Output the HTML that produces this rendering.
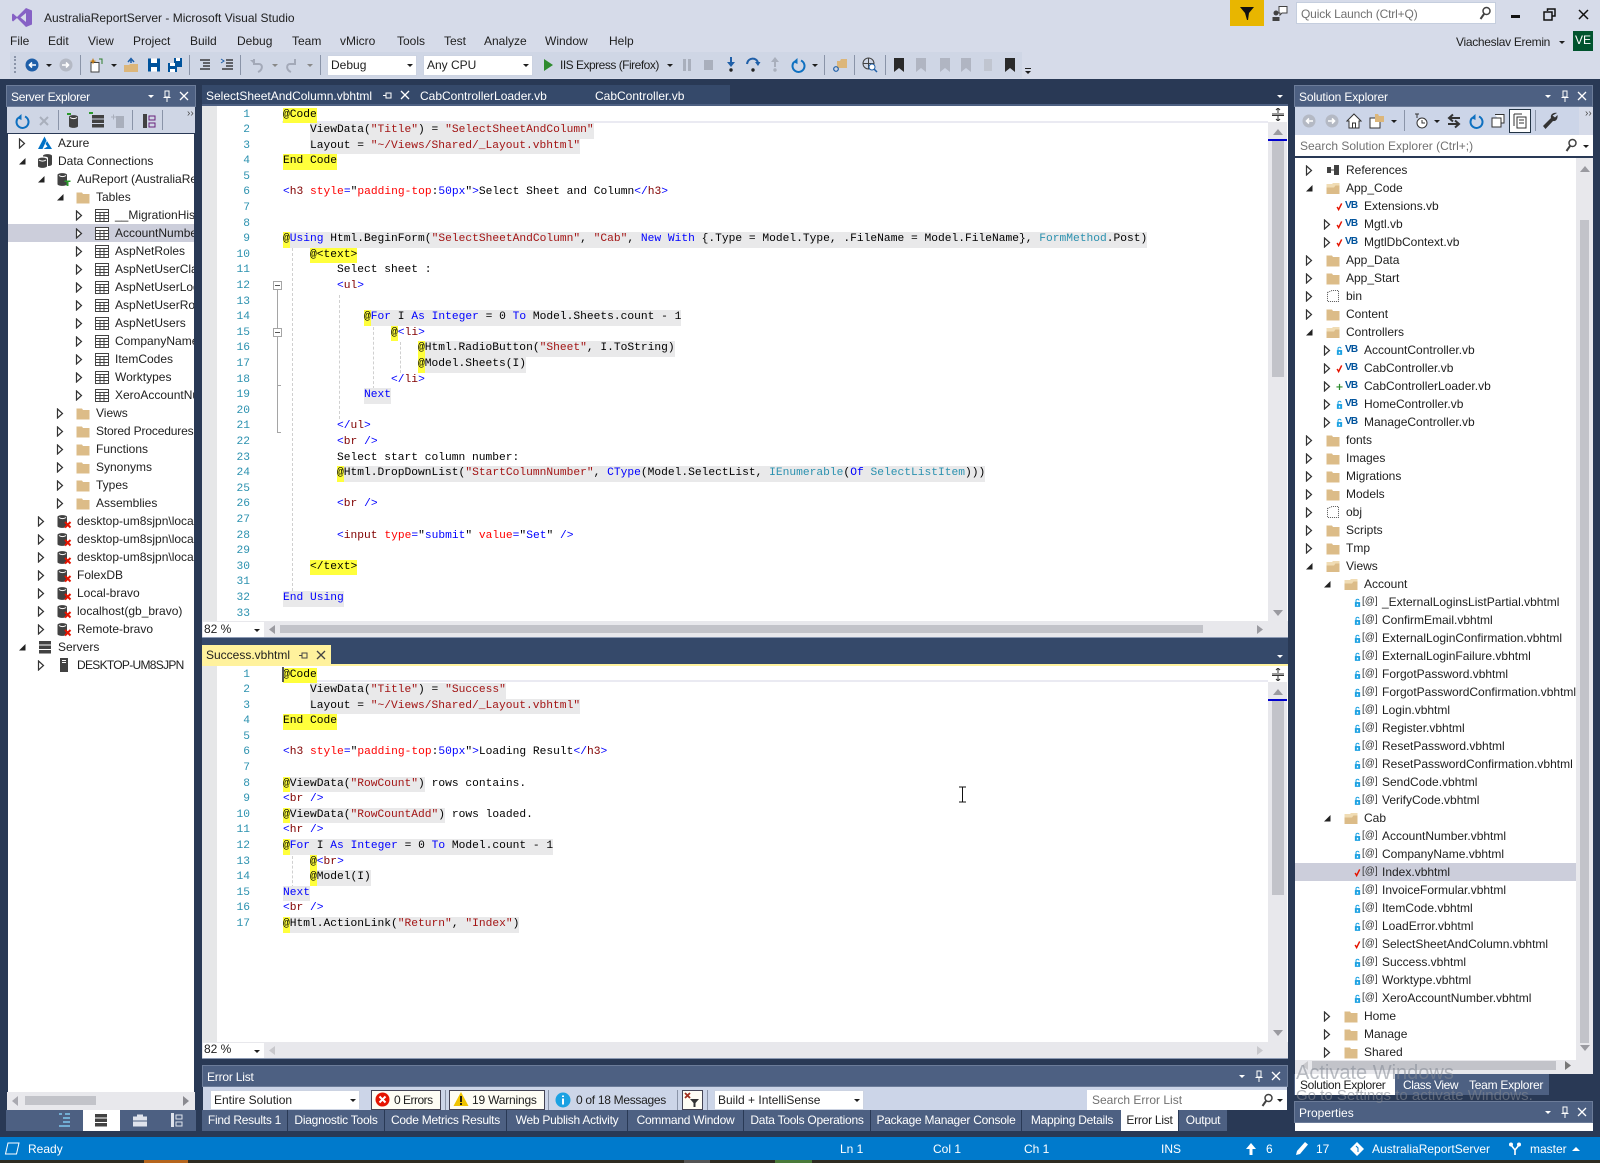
<!DOCTYPE html>
<html lang="en"><head><meta charset="utf-8"><title>AustraliaReportServer - Microsoft Visual Studio</title>
<style>
html,body{margin:0;padding:0;width:1600px;height:1163px;overflow:hidden;background:#293955}
body{position:relative;font:12px/16px "Liberation Sans",sans-serif;color:#1e1e1e}
.x{position:absolute;white-space:nowrap;font-weight:normal;font-style:normal}
.b{position:absolute;display:block}
.w{color:#fff}
.n3{letter-spacing:-.3px}
.tree{position:absolute;background:#fff;overflow:hidden}
.r{position:relative;height:18px;--l:0;color:#1e1e1e}
.L1{--l:1}.L2{--l:2}.L3{--l:3}
.r svg{position:absolute}
.ar{width:9px;height:11px;top:4px;left:calc(var(--ax) + var(--l)*var(--in))}
.ic{width:16px;height:16px;top:1px;left:calc(var(--ix) + var(--l)*var(--in))}
.t{position:absolute;top:0;line-height:18px;white-space:nowrap;left:calc(var(--tx) + var(--l)*var(--in))}
.vb{position:absolute;top:0;line-height:18px;font-size:10px;font-weight:bold;letter-spacing:-.8px;color:#00539c;left:calc(var(--ix) + var(--l)*var(--in) + 2px)}
.fi{position:absolute;top:0;line-height:18px;font-size:10px;color:#333;left:calc(var(--ix) + var(--l)*var(--in) + 1px)}
.st{width:7px;height:9px;top:5px;left:calc(var(--ix) + var(--l)*var(--in) - 7px)}
.sel{background:#cccedb}
.code{position:absolute;font:11.25px/15.6px "Liberation Mono",monospace;color:#000;white-space:pre}
.c{height:15.6px;line-height:15.6px}
.num{position:absolute;width:40px;text-align:right;font:11.25px/15.6px "Liberation Mono",monospace;color:#2b91af}
.k{color:#00f}.s{color:#a31515}.n{color:#800000}.d{color:#00f}.a{color:#f00}.p{color:#2b91af}
.g,.y{display:inline-block;height:15.6px}
.g{background:#e9e9ea}.y{background:#ffff3c}
.sb{position:absolute;background:#e8e8ec}
.th{position:absolute;background:#c2c3c9}
.tab{position:absolute;top:1110px;height:21px;line-height:20px;background:#4d6082;color:#fff;text-align:center;letter-spacing:-.25px}
.title{position:absolute;background:#4d6082;height:22px;box-shadow:inset 0 0 0 1px #6c7c99}
.tb{position:absolute;background:#ccd5e8}
.cb{position:absolute;background:#fff;border:1px solid #ccd3e2;box-sizing:border-box;padding-left:3px;line-height:18px}
.sep{position:absolute;width:1px;background:#8a94a8}
.ds{position:absolute;width:0;height:0;border-left:3px solid transparent;border-right:3px solid transparent;border-top:3px solid #1e1e1e}
.gd{position:absolute;width:0;border-left:1px dashed #d0d0d0}
</style></head><body>
<svg width="0" height="0" style="position:absolute"><defs>
<symbol id="ra" viewBox="0 0 9 11"><path d="M1.5 1 L6.5 5.5 L1.5 10 Z" fill="#fff" stroke="#333" stroke-width="1.2"/></symbol>
<symbol id="da" viewBox="0 0 9 11"><path d="M7.5 2 V8.5 H1 Z" fill="#222"/></symbol>
<symbol id="fo" viewBox="0 0 16 16"><path d="M1.5 3.5 H7 L8 5 H14.5 V14.5 H1.5 Z" fill="#dcbc88"/></symbol>
<symbol id="fop" viewBox="0 0 16 16"><path d="M1.5 4 H7 L8 3 H14.5 V14 H1.5 Z" fill="#f0dcb4"/><path d="M1.5 7.5 H9 L10.5 5.5 H14.5 V14 H1.5 Z" fill="#dcbc88"/></symbol>
<symbol id="tbl" viewBox="0 0 16 16"><path d="M1.5 2.5 H14.5 V14.5 H1.5 Z M1.5 5.5 H14.5 M1.5 8.5 H14.5 M1.5 11.5 H14.5 M6 5.5 V14.5 M10 5.5 V14.5" fill="#fff" stroke="#424242"/></symbol>
<symbol id="db" viewBox="0 0 16 16"><path d="M2 4 C2 1.5 11 1.5 11 4 V13 C11 15.5 2 15.5 2 13 Z" fill="#424242"/><path d="M3 4.5 C5 6 8 6 10 4.5" fill="none" stroke="#fff"/></symbol>
<symbol id="dbx" viewBox="0 0 16 16"><path d="M1.5 4 C1.5 1.5 11 1.5 11 4 V13 C11 15.5 1.5 15.5 1.5 13 Z" fill="#424242"/><path d="M3 4.5 C5 6 8 6 10 4.5" fill="none" stroke="#fff"/><path d="M9 9 L14.5 14.5 M14.5 9 L9 14.5" stroke="#e51400" stroke-width="2"/></symbol>
<symbol id="dbg" viewBox="0 0 16 16"><path d="M1.5 4 C1.5 1.5 11 1.5 11 4 V13 C11 15.5 1.5 15.5 1.5 13 Z" fill="#424242"/><path d="M3 4.5 C5 6 8 6 10 4.5" fill="none" stroke="#fff"/><path d="M8.5 9.5 H14.5 V11 H12.5 V15 H10.5 V11 H8.5 Z" fill="#2c9a2c"/></symbol>
<symbol id="dbs" viewBox="0 0 16 16"><path d="M6 3 C6 0.5 15 0.5 15 3 V11 C15 12.5 13 13 11 13 V5 C11 4 9 3.5 6 3.5 Z" fill="#424242"/><path d="M1 6.5 C1 4 10 4 10 6.5 V13 C10 15.5 1 15.5 1 13 Z" fill="#424242"/><path d="M2 7 C4 8.5 7 8.5 9 7" fill="none" stroke="#fff"/></symbol>
<symbol id="srv" viewBox="0 0 16 16"><path d="M2 2 H14 V5.5 H2 Z M2 6.5 H14 V10 H2 Z M2 11 H14 V14.5 H2 Z" fill="#424242"/></symbol>
<symbol id="pc" viewBox="0 0 16 16"><path d="M4 1 H12 V15 H4 Z" fill="#424242"/><path d="M6 3.5 H10 M6 5.5 H10" stroke="#fff"/></symbol>
<symbol id="az" viewBox="0 0 16 16"><path d="M7.5 1.5 L1 14 H5.5 L9.5 5.5 Z" fill="#0072c6"/><path d="M10 6 L15 14 H6.5 L10.5 11.5 L8.5 9 Z" fill="#0072c6"/></symbol>
<symbol id="refs" viewBox="0 0 16 16"><path d="M2 5 H6 V11 H2 Z M9 3 H14 V13 H9 Z" fill="#424242"/><path d="M6 8 H9" stroke="#424242"/></symbol>
<symbol id="dots" viewBox="0 0 16 16"><path d="M2.5 4.5 L7 2.5 H13.5 V13.5 H2.5 Z" fill="none" stroke="#555" stroke-dasharray="1 1"/></symbol>
<symbol id="lk" viewBox="0 0 8 10"><path d="M1 4.5 H7 V10 H1 Z" fill="#1ba1e2"/><path d="M2.3 4.5 V2.7 C2.3 .8 5.7 .8 5.7 2.7" fill="none" stroke="#1ba1e2" stroke-width="1.2"/><path d="M3.2 6.5 H4.8 V8.5 H3.2 Z" fill="#fff"/></symbol>
<symbol id="ck" viewBox="0 0 8 10"><path d="M1.3 5.5 L3 8.5 L6.5 1.5" fill="none" stroke="#e51400" stroke-width="1.7"/></symbol>
<symbol id="pl" viewBox="0 0 8 10"><path d="M4 2 V9 M.5 5.5 H7.5" fill="none" stroke="#2c8a2c" stroke-width="1.4"/></symbol>
<symbol id="x" viewBox="0 0 10 10"><path d="M1 1 L9 9 M9 1 L1 9" stroke="#fff" stroke-width="1.3"/></symbol>
<symbol id="pin" viewBox="0 0 10 12"><path d="M3 1 H7 V7 H3 Z M1.5 7.5 H8.5 M5 8 V12" fill="none" stroke="#fff"/></symbol>
<symbol id="rf" viewBox="0 0 16 16"><path d="M4 5 A6 6 0 1 0 11 3.5" fill="none" stroke="#0e70c0" stroke-width="2"/><path d="M7.5 1 L7.5 7 L3 5 Z" fill="#0e70c0"/></symbol>
<symbol id="circ" viewBox="0 0 16 16"><circle cx="8" cy="8" r="6.5" fill="currentColor"/><path d="M12 8 H6 M8 5.5 L5.5 8 L8 10.5" fill="none" stroke="#fff" stroke-width="1.6"/></symbol>
<symbol id="bm" viewBox="0 0 16 16"><path d="M3 1 H13 V15 L8 11 L3 15 Z" fill="currentColor"/></symbol>
</defs></svg>

<!-- Title area -->
<div class="b" style="left:0;top:0;width:1600px;height:79px;background:#d6dbe9"></div>
<svg class="b" style="left:11px;top:7px" width="22" height="21" viewBox="0 0 22 21"><path d="M15 1 L21 3.5 V17.5 L15 20 L6 11 L2 14.5 L1 13.5 V7.5 L2 6.5 L6 10 Z" fill="#8661c5"/><path d="M15 6 L9.5 10.5 L15 15 Z" fill="#d6dbe9"/></svg>
<b class="x" style="left:44px;top:10px;color:#1e1e1e">AustraliaReportServer - Microsoft Visual Studio</b>
<b class="x" style="left:10px;top:33px">File</b><b class="x" style="left:48px;top:33px">Edit</b><b class="x" style="left:88px;top:33px">View</b><b class="x" style="left:133px;top:33px">Project</b><b class="x" style="left:190px;top:33px">Build</b><b class="x" style="left:237px;top:33px">Debug</b><b class="x" style="left:292px;top:33px">Team</b><b class="x" style="left:340px;top:33px">vMicro</b><b class="x" style="left:397px;top:33px">Tools</b><b class="x" style="left:444px;top:33px">Test</b><b class="x" style="left:484px;top:33px">Analyze</b><b class="x" style="left:545px;top:33px">Window</b><b class="x" style="left:609px;top:33px">Help</b>

<!-- notifications / window buttons -->
<div class="b" style="left:1230px;top:0;width:34px;height:26px;background:#e8b600"></div>
<svg class="b" style="left:1239px;top:6px" width="16" height="15" viewBox="0 0 16 15"><path d="M1 1 H15 L10 7 L9 14 H8 L6 7 Z" fill="#111"/></svg>
<svg class="b" style="left:1271px;top:5px" width="17" height="17" viewBox="0 0 17 17"><path d="M8 1.5 H16 V8 H11 L9 10 V8 H8 Z" fill="#fff" stroke="#424242"/><circle cx="5" cy="8" r="2.5" fill="#424242"/><path d="M1.5 16 V12 H8.5 V16 Z" fill="#424242"/></svg>
<div class="b" style="left:1296px;top:2px;width:200px;height:22px;background:#fff;border:1px solid #c5cede;box-sizing:border-box"></div>
<b class="x n3" style="left:1301px;top:6px;color:#717171;letter-spacing:-.15px">Quick Launch (Ctrl+Q)</b>
<svg class="b" style="left:1478px;top:6px" width="14" height="14" viewBox="0 0 14 14"><circle cx="8.5" cy="5" r="3.5" fill="none" stroke="#424242" stroke-width="1.5"/><path d="M6 8 L2.5 13" stroke="#424242" stroke-width="2"/></svg>
<div class="b" style="left:1511px;top:15px;width:9px;height:3px;background:#111"></div>
<svg class="b" style="left:1543px;top:8px" width="13" height="13" viewBox="0 0 13 13"><path d="M4.5 3 V1 H12 V8 H9.5 M1 4 H9 V12 H1 Z" fill="none" stroke="#111" stroke-width="1.5"/></svg>
<svg class="b" style="left:1578px;top:9px" width="11" height="11" viewBox="0 0 11 11"><path d="M1 1 L10 10 M10 1 L1 10" stroke="#111" stroke-width="1.5"/></svg>
<b class="x n3" style="left:1456px;top:34px">Viacheslav Eremin</b>
<div class="ds" style="left:1559px;top:41px"></div>
<div class="b w" style="left:1573px;top:31px;width:20px;height:20px;background:#00532d;text-align:center;line-height:19px;font-size:12px">VE</div>

<!-- main toolbar -->
<div class="tb" style="left:10px;top:52px;width:1012px;height:26px;background:#cfd6e5"></div>
<div class="tb" style="left:1022px;top:52px;width:11px;height:26px;background:#d6dbe9"></div>
<div class="b" style="left:14px;top:56px;width:2px;height:17px;border-left:2px dotted #8a94a8"></div>
<svg class="b" style="left:24px;top:57px;color:#1f5fa8" width="16" height="16"><use href="#circ"/></svg><div class="ds" style="left:46px;top:64px"></div>
<svg class="b" style="left:58px;top:57px;color:#b4b9c4" width="16" height="16"><use href="#circ" transform="matrix(-1 0 0 1 16 0)"/></svg>
<div class="sep" style="left:80px;top:55px;height:20px"></div>
<svg class="b" style="left:88px;top:57px" width="16" height="16" viewBox="0 0 16 16"><path d="M3 5.5 H11 V15 H3 Z" fill="#fff" stroke="#424242"/><path d="M5 1 L6 3.5 L8.5 4 L6 5 L5 7.5 L4 5 L1.5 4 L4 3.5 Z" fill="#c27d1a"/><path d="M11 2 H14 V7" fill="none" stroke="#2c7d2c"/></svg><div class="ds" style="left:111px;top:64px"></div>
<svg class="b" style="left:123px;top:57px" width="16" height="16" viewBox="0 0 16 16"><path d="M1 8 H6 L7 7 H15 V15 H1 Z" fill="#dcb67a"/><path d="M5 5 L8 1.5 L11 5 M8 2 V6" fill="none" stroke="#1f5fa8" stroke-width="1.5"/></svg>
<svg class="b" style="left:146px;top:57px" width="16" height="16" viewBox="0 0 16 16"><path d="M2 1.5 H14 V14.5 H2 Z" fill="#00539c"/><path d="M5 1.5 H11 V6 H5 Z M5 10 H11 V14.5 H5 Z" fill="#fff"/></svg>
<svg class="b" style="left:167px;top:57px" width="16" height="16" viewBox="0 0 16 16"><path d="M7 1 H15 V10 H7 Z" fill="#00539c"/><path d="M9 1 H13 V4 H9 Z" fill="#fff"/><path d="M1 6 H10 V15 H1 Z" fill="#00539c"/><path d="M3 6 H8 V9 H3 Z M3 12 H8 V15 H3 Z" fill="#fff"/></svg>
<div class="sep" style="left:189px;top:55px;height:20px"></div>
<svg class="b" style="left:198px;top:58px" width="14" height="14" viewBox="0 0 14 14"><path d="M2 2 H12 M5 5 H12 M5 8 H12 M2 11 H12" stroke="#1e1e1e" stroke-width="1.2"/></svg>
<svg class="b" style="left:220px;top:58px" width="14" height="14" viewBox="0 0 14 14"><path d="M6 2 H13 M6 5 H13 M6 8 H13 M2 11 H13" stroke="#1e1e1e" stroke-width="1.2"/><path d="M1 1 L4 3 L1 5" fill="none" stroke="#1f5fa8"/></svg>
<div class="sep" style="left:240px;top:55px;height:20px"></div>
<svg class="b" style="left:249px;top:57px" width="16" height="16" viewBox="0 0 16 16"><path d="M5 2 V7 H10 C14 7 14 13 9 15" fill="none" stroke="#a3a9b8" stroke-width="2"/><path d="M1 3 H6 V8 Z" fill="#a3a9b8"/></svg><div class="ds" style="left:272px;top:64px;border-top-color:#888"></div>
<svg class="b" style="left:284px;top:57px" width="16" height="16" viewBox="0 0 16 16"><path d="M11 2 V7 H6 C2 7 2 13 7 15" fill="none" stroke="#a3a9b8" stroke-width="2"/></svg><div class="ds" style="left:307px;top:64px;border-top-color:#888"></div>
<div class="sep" style="left:320px;top:55px;height:20px"></div>
<div class="cb" style="left:327px;top:55px;width:90px;height:21px">Debug</div><div class="ds" style="left:407px;top:64px"></div>
<div class="cb" style="left:423px;top:55px;width:110px;height:21px">Any CPU</div><div class="ds" style="left:523px;top:64px"></div>
<svg class="b" style="left:543px;top:58px" width="11" height="14" viewBox="0 0 11 14"><path d="M1 1 L10 7 L1 13 Z" fill="#2e8b2e"/></svg>
<b class="x" style="left:560px;top:57px;letter-spacing:-.5px">IIS Express (Firefox)</b><div class="ds" style="left:667px;top:64px"></div>
<div class="b" style="left:683px;top:59px;width:3px;height:12px;background:#a9afbc"></div><div class="b" style="left:688px;top:59px;width:3px;height:12px;background:#a9afbc"></div>
<div class="b" style="left:704px;top:60px;width:9px;height:10px;background:#a9afbc"></div>
<svg class="b" style="left:723px;top:56px" width="16" height="17" viewBox="0 0 16 17"><path d="M8 1 V8" stroke="#1f5fa8" stroke-width="2"/><path d="M4 6 H12 L8 11 Z" fill="#1f5fa8"/><circle cx="8" cy="14" r="1.7" fill="#222"/></svg>
<svg class="b" style="left:745px;top:56px" width="16" height="17" viewBox="0 0 16 17"><path d="M2 8 C3 1 12 1 13 7" fill="none" stroke="#1f5fa8" stroke-width="2"/><path d="M10 6 H15.5 L13 10 Z" fill="#1f5fa8"/><circle cx="8" cy="14" r="1.7" fill="#222"/></svg>
<svg class="b" style="left:767px;top:56px" width="16" height="17" viewBox="0 0 16 17"><path d="M8 11 V4" stroke="#a9afbc" stroke-width="2"/><path d="M4 6 H12 L8 1 Z" fill="#a9afbc"/><circle cx="8" cy="14" r="1.7" fill="#a9afbc"/></svg>
<svg class="b" style="left:790px;top:57px" width="16" height="16"><use href="#rf"/></svg><div class="ds" style="left:812px;top:64px"></div>
<div class="sep" style="left:824px;top:55px;height:20px"></div>
<svg class="b" style="left:832px;top:57px" width="16" height="16" viewBox="0 0 16 16"><path d="M5 4 H8 L9 2 H15 V11 H5 Z" fill="#dcb67a"/><circle cx="4" cy="12" r="2.3" fill="none" stroke="#1f5fa8" stroke-width="1.2"/></svg>
<div class="sep" style="left:854px;top:55px;height:20px"></div>
<svg class="b" style="left:862px;top:57px" width="16" height="16" viewBox="0 0 16 16"><circle cx="6.5" cy="6.5" r="5.5" fill="none" stroke="#424242"/><path d="M1 6.5 H12 M6.5 1 V12" stroke="#424242"/><circle cx="10" cy="10" r="3" fill="#fff" stroke="#1f5fa8"/><path d="M12 12 L15 15" stroke="#1f5fa8" stroke-width="1.5"/></svg>
<div class="sep" style="left:885px;top:55px;height:20px"></div>
<svg class="b" style="left:891px;top:57px;color:#2a2a2a" width="16" height="16"><use href="#bm"/></svg>
<svg class="b" style="left:913px;top:57px;color:#b0b5c2" width="16" height="16"><use href="#bm"/></svg>
<svg class="b" style="left:937px;top:57px;color:#b0b5c2" width="16" height="16"><use href="#bm"/></svg>
<svg class="b" style="left:958px;top:57px;color:#b0b5c2" width="16" height="16"><use href="#bm"/></svg>
<svg class="b" style="left:980px;top:57px;color:#c0c5d0" width="16" height="16"><path d="M4 2 H12 V14 H4 Z" fill="currentColor"/></svg>
<svg class="b" style="left:1002px;top:57px;color:#2a2a2a" width="16" height="16"><use href="#bm"/></svg>
<div class="b" style="left:1025px;top:68px;width:6px;height:1px;background:#222"></div><div class="ds" style="left:1025px;top:71px"></div>

<!-- ===== Server Explorer ===== -->
<div class="title" style="left:6px;top:85px;width:190px"></div>
<b class="x w" style="left:11px;top:89px;letter-spacing:-.3px">Server Explorer</b>
<div class="ds" style="left:148px;top:95px;border-top-color:#fff"></div>
<svg class="b" style="left:162px;top:90px" width="10" height="12"><use href="#pin"/></svg>
<svg class="b" style="left:179px;top:91px" width="10" height="10"><use href="#x"/></svg>
<div class="tb" style="left:7px;top:107px;width:188px;height:26px;background:#cfd6e5"></div>
<svg class="b" style="left:14px;top:113px" width="16" height="16"><use href="#rf"/></svg>
<svg class="b" style="left:39px;top:116px" width="10" height="10" viewBox="0 0 10 10"><path d="M1 1 L9 9 M9 1 L1 9" stroke="#a9afbc" stroke-width="2"/></svg>
<div class="sep" style="left:58px;top:110px;height:20px"></div>
<svg class="b" style="left:67px;top:113px" width="16" height="16"><use href="#db"/></svg><div class="b" style="left:67px;top:113px;width:4px;height:2px;background:#2c9a2c"></div>
<svg class="b" style="left:90px;top:113px" width="16" height="16"><use href="#srv"/></svg><div class="b" style="left:89px;top:112px;width:4px;height:2px;background:#2c9a2c"></div>
<svg class="b" style="left:110px;top:113px" width="16" height="16" viewBox="0 0 16 16"><path d="M6 3 H14 V15 H6 Z" fill="#a9afbc"/><path d="M1 4 H6 M3.5 1.5 V6.5" stroke="#a9afbc"/></svg>
<div class="sep" style="left:132px;top:110px;height:20px"></div>
<svg class="b" style="left:141px;top:113px" width="16" height="16" viewBox="0 0 16 16"><path d="M2 1 H6 V15 H2 Z" fill="#424242"/><path d="M8 3 H14 V7 H8 Z M8 10 H14 V14 H8 Z" fill="none" stroke="#68217a"/></svg>
<div class="sep" style="left:162px;top:110px;height:20px"></div>
<div class="x" style="left:187px;top:106px;color:#444;font-size:10px">››</div>

<div class="tree" style="left:8px;top:134px;width:186px;height:958px;--ax:10px;--ix:29px;--tx:50px;--in:19px">
<div class="r"><svg class="ar"><use href="#ra"/></svg><svg class="ic"><use href="#az"/></svg><span class="t">Azure</span></div>
<div class="r"><svg class="ar"><use href="#da"/></svg><svg class="ic"><use href="#dbs"/></svg><span class="t">Data Connections</span></div>
<div class="r L1"><svg class="ar"><use href="#da"/></svg><svg class="ic"><use href="#dbg"/></svg><span class="t">AuReport (AustraliaReportServer)</span></div>
<div class="r L2"><svg class="ar"><use href="#da"/></svg><svg class="ic"><use href="#fo"/></svg><span class="t">Tables</span></div>
<div class="r L3"><svg class="ar"><use href="#ra"/></svg><svg class="ic"><use href="#tbl"/></svg><span class="t">__MigrationHistory</span></div>
<div class="r L3 sel"><svg class="ar"><use href="#ra"/></svg><svg class="ic"><use href="#tbl"/></svg><span class="t">AccountNumber</span></div>
<div class="r L3"><svg class="ar"><use href="#ra"/></svg><svg class="ic"><use href="#tbl"/></svg><span class="t">AspNetRoles</span></div>
<div class="r L3"><svg class="ar"><use href="#ra"/></svg><svg class="ic"><use href="#tbl"/></svg><span class="t">AspNetUserClaims</span></div>
<div class="r L3"><svg class="ar"><use href="#ra"/></svg><svg class="ic"><use href="#tbl"/></svg><span class="t">AspNetUserLogins</span></div>
<div class="r L3"><svg class="ar"><use href="#ra"/></svg><svg class="ic"><use href="#tbl"/></svg><span class="t">AspNetUserRoles</span></div>
<div class="r L3"><svg class="ar"><use href="#ra"/></svg><svg class="ic"><use href="#tbl"/></svg><span class="t">AspNetUsers</span></div>
<div class="r L3"><svg class="ar"><use href="#ra"/></svg><svg class="ic"><use href="#tbl"/></svg><span class="t">CompanyName</span></div>
<div class="r L3"><svg class="ar"><use href="#ra"/></svg><svg class="ic"><use href="#tbl"/></svg><span class="t">ItemCodes</span></div>
<div class="r L3"><svg class="ar"><use href="#ra"/></svg><svg class="ic"><use href="#tbl"/></svg><span class="t">Worktypes</span></div>
<div class="r L3"><svg class="ar"><use href="#ra"/></svg><svg class="ic"><use href="#tbl"/></svg><span class="t">XeroAccountNumber</span></div>
<div class="r L2"><svg class="ar"><use href="#ra"/></svg><svg class="ic"><use href="#fo"/></svg><span class="t">Views</span></div>
<div class="r L2"><svg class="ar"><use href="#ra"/></svg><svg class="ic"><use href="#fo"/></svg><span class="t" style="letter-spacing:-.15px">Stored Procedures</span></div>
<div class="r L2"><svg class="ar"><use href="#ra"/></svg><svg class="ic"><use href="#fo"/></svg><span class="t">Functions</span></div>
<div class="r L2"><svg class="ar"><use href="#ra"/></svg><svg class="ic"><use href="#fo"/></svg><span class="t">Synonyms</span></div>
<div class="r L2"><svg class="ar"><use href="#ra"/></svg><svg class="ic"><use href="#fo"/></svg><span class="t">Types</span></div>
<div class="r L2"><svg class="ar"><use href="#ra"/></svg><svg class="ic"><use href="#fo"/></svg><span class="t">Assemblies</span></div>
<div class="r L1"><svg class="ar"><use href="#ra"/></svg><svg class="ic"><use href="#dbx"/></svg><span class="t">desktop-um8sjpn\localdb</span></div>
<div class="r L1"><svg class="ar"><use href="#ra"/></svg><svg class="ic"><use href="#dbx"/></svg><span class="t">desktop-um8sjpn\localdb</span></div>
<div class="r L1"><svg class="ar"><use href="#ra"/></svg><svg class="ic"><use href="#dbx"/></svg><span class="t">desktop-um8sjpn\localdb</span></div>
<div class="r L1"><svg class="ar"><use href="#ra"/></svg><svg class="ic"><use href="#dbx"/></svg><span class="t">FolexDB</span></div>
<div class="r L1"><svg class="ar"><use href="#ra"/></svg><svg class="ic"><use href="#dbx"/></svg><span class="t">Local-bravo</span></div>
<div class="r L1"><svg class="ar"><use href="#ra"/></svg><svg class="ic"><use href="#dbx"/></svg><span class="t">localhost(gb_bravo)</span></div>
<div class="r L1"><svg class="ar"><use href="#ra"/></svg><svg class="ic"><use href="#dbx"/></svg><span class="t">Remote-bravo</span></div>
<div class="r"><svg class="ar"><use href="#da"/></svg><svg class="ic"><use href="#srv"/></svg><span class="t">Servers</span></div>
<div class="r L1"><svg class="ar"><use href="#ra"/></svg><svg class="ic"><use href="#pc"/></svg><span class="t" style="letter-spacing:-.7px">DESKTOP-UM8SJPN</span></div>
</div>
<div class="sb" style="left:7px;top:1092px;width:188px;height:18px"></div>
<div class="th" style="left:25px;top:1096px;width:71px;height:9px"></div>
<svg class="b" style="left:12px;top:1096px" width="7" height="10"><path d="M6 0 L0 5 L6 10 Z" fill="#a9a9b0"/></svg>
<svg class="b" style="left:183px;top:1096px" width="7" height="10"><path d="M0 0 L6 5 L0 10 Z" fill="#8a8a90"/></svg>
<div class="b" style="left:6px;top:1110px;width:190px;height:21px;background:#4d6082"></div>
<div class="b" style="left:83px;top:1110px;width:37px;height:21px;background:#fff"></div>
<svg class="b" style="left:56px;top:1112px" width="16" height="16" viewBox="0 0 16 16"><path d="M3 2 H6 M9 2 H14 M7 6 H14 M7 10 H14 M3 14 H14" stroke="#7fc8f0" stroke-width="1.4"/></svg>
<svg class="b" style="left:93px;top:1112px" width="16" height="16"><use href="#srv"/></svg>
<svg class="b" style="left:132px;top:1112px" width="16" height="16" viewBox="0 0 16 16"><path d="M1.5 5 H14.5 V14 H1.5 Z M5.5 5 V3 H10.5 V5" fill="#dfe3ec" stroke="#dfe3ec"/><path d="M1 9 H15" stroke="#4d6082"/></svg>
<svg class="b" style="left:169px;top:1112px" width="16" height="16" viewBox="0 0 16 16"><path d="M2 1 H5 V15 H2 Z" fill="#dfe3ec"/><path d="M7 3 H13 V7 H7 Z M7 10 H13 V14 H7 Z" fill="none" stroke="#dfe3ec"/></svg>

<!-- ===== Editor 1 ===== -->
<div class="b" style="left:202px;top:85px;width:213px;height:20px;background:#35496a"></div>
<div class="b" style="left:415px;top:85px;width:315px;height:20px;background:#35496a"></div>
<div class="b" style="left:202px;top:104px;width:1086px;height:2px;background:#4d6082"></div>
<b class="x w" style="left:206px;top:88px">SelectSheetAndColumn.vbhtml</b>
<svg class="b" style="left:382px;top:91px" width="10" height="9" viewBox="0 0 10 9"><path d="M1 4.5 H4 M4 1.5 V7.5 M4 2 H9 V7 H4" fill="none" stroke="#fff"/></svg>
<svg class="b" style="left:400px;top:90px" width="10" height="10"><use href="#x"/></svg>
<b class="x w" style="left:420px;top:88px">CabControllerLoader.vb</b>
<b class="x w" style="left:595px;top:88px">CabController.vb</b>
<div class="ds" style="left:1277px;top:95px;border-top-color:#fff"></div>

<div class="b" style="left:202px;top:106px;width:1086px;height:515px;background:#fff"></div>
<div class="b" style="left:202px;top:106px;width:15px;height:515px;background:#e6e7e8"></div>
<div class="b" style="left:282px;top:106px;width:986px;height:15px;border-bottom:2px solid #eaeaf2;box-sizing:content-box"></div>
<div class="num" style="left:210px;top:107.5px"><div class="c">1</div><div class="c">2</div><div class="c">3</div><div class="c">4</div><div class="c">5</div><div class="c">6</div><div class="c">7</div><div class="c">8</div><div class="c">9</div><div class="c">10</div><div class="c">11</div><div class="c">12</div><div class="c">13</div><div class="c">14</div><div class="c">15</div><div class="c">16</div><div class="c">17</div><div class="c">18</div><div class="c">19</div><div class="c">20</div><div class="c">21</div><div class="c">22</div><div class="c">23</div><div class="c">24</div><div class="c">25</div><div class="c">26</div><div class="c">27</div><div class="c">28</div><div class="c">29</div><div class="c">30</div><div class="c">31</div><div class="c">32</div><div class="c">33</div></div>
<div class="gd" style="left:292px;top:248px;height:348px"></div>
<div class="gd" style="left:339px;top:295px;height:124px"></div>
<div class="gd" style="left:373px;top:327px;height:62px"></div>
<div class="gd" style="left:400px;top:342px;height:31px"></div>
<div class="b" style="left:277px;top:290px;width:1px;height:142px;background:#a5a5a5"></div>
<div class="b" style="left:277px;top:385px;width:4px;height:1px;background:#a5a5a5"></div>
<div class="b" style="left:277px;top:432px;width:4px;height:1px;background:#a5a5a5"></div>
<div class="b" style="left:273px;top:281px;width:7px;height:7px;border:1px solid #a5a5a5;background:#fff;box-sizing:content-box"></div><div class="b" style="left:275px;top:285px;width:5px;height:1px;background:#555"></div>
<div class="b" style="left:273px;top:328px;width:7px;height:7px;border:1px solid #a5a5a5;background:#fff;box-sizing:content-box"></div><div class="b" style="left:275px;top:332px;width:5px;height:1px;background:#555"></div>
<div class="code" style="left:283px;top:107.5px"><div class="c"><span class="y">@Code</span></div><div class="c">    <span class="g">ViewData(<span class="s">"Title"</span>) = <span class="s">"SelectSheetAndColumn"</span></span></div><div class="c">    <span class="g">Layout = <span class="s">"~/Views/Shared/_Layout.vbhtml"</span></span></div><div class="c"><span class="y">End Code</span></div><div class="c"></div><div class="c"><span class="d">&lt;</span><span class="n">h3</span> <span class="a">style</span><span class="d">=</span>"<span class="a">padding-top</span>:<span class="d">50px</span>"<span class="d">&gt;</span>Select Sheet and Column<span class="d">&lt;/</span><span class="n">h3</span><span class="d">&gt;</span></div><div class="c"></div><div class="c"></div><div class="c"><span class="g"><span class="y">@</span><span class="k">Using</span> Html.BeginForm(<span class="s">"SelectSheetAndColumn"</span>, <span class="s">"Cab"</span>, <span class="k">New With</span> {.Type = Model.Type, .FileName = Model.FileName}, <span class="p">FormMethod</span>.Post)</span></div><div class="c">    <span class="y">@&lt;text&gt;</span></div><div class="c">        Select sheet :</div><div class="c">        <span class="d">&lt;</span><span class="n">ul</span><span class="d">&gt;</span></div><div class="c"></div><div class="c">            <span class="g"><span class="y">@</span><span class="k">For</span> I <span class="k">As</span> <span class="k">Integer</span> = 0 <span class="k">To</span> Model.Sheets.count - 1</span></div><div class="c">                <span class="y">@</span><span class="d">&lt;</span><span class="n">li</span><span class="d">&gt;</span></div><div class="c">                    <span class="g"><span class="y">@</span>Html.RadioButton(<span class="s">"Sheet"</span>, I.ToString)</span></div><div class="c">                    <span class="g"><span class="y">@</span>Model.Sheets(I)</span></div><div class="c">                <span class="d">&lt;/</span><span class="n">li</span><span class="d">&gt;</span></div><div class="c">            <span class="g"><span class="k">Next</span></span></div><div class="c"></div><div class="c">        <span class="d">&lt;/</span><span class="n">ul</span><span class="d">&gt;</span></div><div class="c">        <span class="d">&lt;</span><span class="n">br</span> <span class="d">/&gt;</span></div><div class="c">        Select start column number:</div><div class="c">        <span class="g"><span class="y">@</span>Html.DropDownList(<span class="s">"StartColumnNumber"</span>, <span class="k">CType</span>(Model.SelectList, <span class="p">IEnumerable</span>(<span class="k">Of</span> <span class="p">SelectListItem</span>)))</span></div><div class="c"></div><div class="c">        <span class="d">&lt;</span><span class="n">br</span> <span class="d">/&gt;</span></div><div class="c"></div><div class="c">        <span class="d">&lt;</span><span class="n">input</span> <span class="a">type</span><span class="d">=</span>"<span class="d">submit</span>" <span class="a">value</span><span class="d">=</span>"<span class="d">Set</span>" <span class="d">/&gt;</span></div><div class="c"></div><div class="c">    <span class="y">&lt;/text&gt;</span></div><div class="c"></div><div class="c"><span class="g"><span class="k">End Using</span></span></div></div>
<!-- scrollbars editor 1 -->
<div class="sb" style="left:1268px;top:106px;width:19px;height:515px"></div>
<div class="b" style="left:1268px;top:106px;width:19px;height:16px;background:#fff"></div>
<svg class="b" style="left:1271px;top:108px" width="14" height="13" viewBox="0 0 14 13"><path d="M1 6 H13 M1 7.5 H13 M7 0 V5 M7 8 V13 M5 2 L7 0 L9 2 M5 11 L7 13 L9 11" stroke="#333" fill="none"/></svg>
<svg class="b" style="left:1273px;top:129px" width="10" height="6"><path d="M0 6 L5 0 L10 6 Z" fill="#9a9aa0"/></svg>
<div class="th" style="left:1272px;top:139px;width:12px;height:238px"></div>
<div class="b" style="left:1268px;top:139px;width:19px;height:2px;background:#0000cd"></div>
<svg class="b" style="left:1273px;top:610px" width="10" height="6"><path d="M0 0 L5 6 L10 0 Z" fill="#9a9aa0"/></svg>
<div class="sb" style="left:202px;top:621px;width:1086px;height:16px"></div>
<div class="cb" style="left:203px;top:622px;width:61px;height:15px;padding-left:1px;line-height:15px;border:0">82 %</div><div class="ds" style="left:254px;top:629px"></div>
<svg class="b" style="left:269px;top:625px" width="6" height="9"><path d="M6 0 L0 4.5 L6 9 Z" fill="#9a9aa0"/></svg>
<div class="th" style="left:280px;top:625px;width:923px;height:8px"></div>
<svg class="b" style="left:1257px;top:625px" width="6" height="9"><path d="M0 0 L6 4.5 L0 9 Z" fill="#9a9aa0"/></svg>
<div class="b" style="left:202px;top:637px;width:1086px;height:1px;background:#8c9ab3"></div>

<!-- ===== Editor 2 ===== -->
<div class="b" style="left:202px;top:638px;width:1086px;height:26px;background:#35496a"></div>
<div class="b" style="left:202px;top:645px;width:129px;height:20px;background:#fff29d"></div>
<div class="b" style="left:202px;top:664px;width:1086px;height:2px;background:#fff29d"></div>
<b class="x" style="left:206px;top:647px;color:#1e1e1e">Success.vbhtml</b>
<svg class="b" style="left:298px;top:651px" width="10" height="9" viewBox="0 0 10 9"><path d="M1 4.5 H4 M4 1.5 V7.5 M4 2 H9 V7 H4" fill="none" stroke="#444"/></svg>
<svg class="b" style="left:316px;top:650px" width="10" height="10" viewBox="0 0 10 10"><path d="M1 1 L9 9 M9 1 L1 9" stroke="#444" stroke-width="1.3"/></svg>
<div class="ds" style="left:1277px;top:655px;border-top-color:#fff"></div>
<div class="b" style="left:202px;top:666px;width:1086px;height:376px;background:#fff"></div>
<div class="b" style="left:202px;top:666px;width:15px;height:376px;background:#e6e7e8"></div>
<div class="b" style="left:282px;top:665px;width:986px;height:15px;border-bottom:2px solid #eaeaf2;box-sizing:content-box"></div>
<div class="num" style="left:210px;top:667.5px"><div class="c">1</div><div class="c">2</div><div class="c">3</div><div class="c">4</div><div class="c">5</div><div class="c">6</div><div class="c">7</div><div class="c">8</div><div class="c">9</div><div class="c">10</div><div class="c">11</div><div class="c">12</div><div class="c">13</div><div class="c">14</div><div class="c">15</div><div class="c">16</div><div class="c">17</div></div>
<div class="gd" style="left:292px;top:856px;height:32px"></div>
<div class="code" style="left:283px;top:667.5px"><div class="c"><span class="y">@Code</span></div><div class="c">    <span class="g">ViewData(<span class="s">"Title"</span>) = <span class="s">"Success"</span></span></div><div class="c">    <span class="g">Layout = <span class="s">"~/Views/Shared/_Layout.vbhtml"</span></span></div><div class="c"><span class="y">End Code</span></div><div class="c"></div><div class="c"><span class="d">&lt;</span><span class="n">h3</span> <span class="a">style</span><span class="d">=</span>"<span class="a">padding-top</span>:<span class="d">50px</span>"<span class="d">&gt;</span>Loading Result<span class="d">&lt;/</span><span class="n">h3</span><span class="d">&gt;</span></div><div class="c"></div><div class="c"><span class="g"><span class="y">@</span>ViewData(<span class="s">"RowCount"</span>)</span> rows contains.</div><div class="c"><span class="d">&lt;</span><span class="n">br</span> <span class="d">/&gt;</span></div><div class="c"><span class="g"><span class="y">@</span>ViewData(<span class="s">"RowCountAdd"</span>)</span> rows loaded.</div><div class="c"><span class="d">&lt;</span><span class="n">hr</span> <span class="d">/&gt;</span></div><div class="c"><span class="g"><span class="y">@</span><span class="k">For</span> I <span class="k">As</span> <span class="k">Integer</span> = 0 <span class="k">To</span> Model.count - 1</span></div><div class="c">    <span class="y">@</span><span class="d">&lt;</span><span class="n">br</span><span class="d">&gt;</span></div><div class="c">    <span class="g"><span class="y">@</span>Model(I)</span></div><div class="c"><span class="g"><span class="k">Next</span></span></div><div class="c"><span class="d">&lt;</span><span class="n">br</span> <span class="d">/&gt;</span></div><div class="c"><span class="g"><span class="y">@</span>Html.ActionLink(<span class="s">"Return"</span>, <span class="s">"Index"</span>)</span></div></div>
<div class="b" style="left:282px;top:667px;width:2px;height:15px;background:#555"></div>
<svg class="b" style="left:958px;top:786px" width="9" height="17" viewBox="0 0 9 17"><path d="M1 1 H8 M1 16 H8 M4.5 1 V16" stroke="#111" fill="none"/></svg>
<!-- scrollbars editor 2 -->
<div class="sb" style="left:1268px;top:666px;width:19px;height:376px"></div>
<div class="b" style="left:1268px;top:666px;width:19px;height:16px;background:#fff"></div>
<svg class="b" style="left:1271px;top:668px" width="14" height="13" viewBox="0 0 14 13"><path d="M1 6 H13 M1 7.5 H13 M7 0 V5 M7 8 V13 M5 2 L7 0 L9 2 M5 11 L7 13 L9 11" stroke="#333" fill="none"/></svg>
<svg class="b" style="left:1273px;top:689px" width="10" height="6"><path d="M0 6 L5 0 L10 6 Z" fill="#9a9aa0"/></svg>
<div class="th" style="left:1272px;top:700px;width:12px;height:195px"></div>
<div class="b" style="left:1268px;top:699px;width:19px;height:2px;background:#0000cd"></div>
<svg class="b" style="left:1273px;top:1030px" width="10" height="6"><path d="M0 0 L5 6 L10 0 Z" fill="#9a9aa0"/></svg>
<div class="sb" style="left:202px;top:1042px;width:1086px;height:16px"></div>
<div class="cb" style="left:203px;top:1043px;width:61px;height:15px;padding-left:1px;line-height:13px;border:0">82 %</div><div class="ds" style="left:254px;top:1050px"></div>
<svg class="b" style="left:269px;top:1046px" width="6" height="9"><path d="M6 0 L0 4.5 L6 9 Z" fill="#c8c8cc"/></svg>
<svg class="b" style="left:1257px;top:1046px" width="6" height="9"><path d="M0 0 L6 4.5 L0 9 Z" fill="#c8c8cc"/></svg>
<div class="b" style="left:202px;top:1058px;width:1086px;height:1px;background:#8c9ab3"></div>

<!-- ===== Error List ===== -->
<div class="title" style="left:202px;top:1065px;width:1086px"></div>
<b class="x w" style="left:207px;top:1069px;letter-spacing:-.2px">Error List</b>
<div class="ds" style="left:1239px;top:1075px;border-top-color:#fff"></div>
<svg class="b" style="left:1254px;top:1070px" width="10" height="12"><use href="#pin"/></svg>
<svg class="b" style="left:1271px;top:1071px" width="10" height="10"><use href="#x"/></svg>
<div class="tb" style="left:203px;top:1087px;width:1084px;height:23px;background:#ccd5e8"></div>
<div class="cb" style="left:210px;top:1090px;width:150px;height:20px;line-height:19px">Entire Solution</div><div class="ds" style="left:350px;top:1099px"></div>
<div class="b" style="left:371px;top:1090px;width:70px;height:20px;background:#fefdf4;border:1px solid #445;box-sizing:border-box"></div>
<svg class="b" style="left:375px;top:1092px" width="15" height="15" viewBox="0 0 15 15"><circle cx="7.5" cy="7.5" r="7" fill="#e51400"/><path d="M4.5 4.5 L10.5 10.5 M10.5 4.5 L4.5 10.5" stroke="#fff" stroke-width="2"/></svg>
<b class="x" style="left:394px;top:1092px;letter-spacing:-.5px">0 Errors</b>
<div class="sep" style="left:445px;top:1090px;height:20px"></div>
<div class="b" style="left:449px;top:1090px;width:96px;height:20px;background:#fefdf4;border:1px solid #445;box-sizing:border-box"></div>
<svg class="b" style="left:453px;top:1091px" width="16" height="16" viewBox="0 0 16 16"><path d="M8 1 L15.5 15 H.5 Z" fill="#f0c400"/><path d="M8 5 V11 M8 12 V14" stroke="#111" stroke-width="1.8"/></svg>
<b class="x" style="left:472px;top:1092px;letter-spacing:-.2px">19 Warnings</b>
<div class="sep" style="left:548px;top:1090px;height:20px"></div>
<svg class="b" style="left:555px;top:1092px" width="16" height="16" viewBox="0 0 16 16"><circle cx="8" cy="8" r="7.5" fill="#1ba1e2"/><path d="M8 6.5 V12.5 M8 3.5 V5" stroke="#fff" stroke-width="2"/></svg>
<b class="x" style="left:576px;top:1092px;letter-spacing:-.3px">0 of 18 Messages</b>
<div class="sep" style="left:677px;top:1090px;height:20px"></div>
<div class="b" style="left:682px;top:1090px;width:21px;height:20px;background:#fefdf4;border:1px solid #445;box-sizing:border-box"></div>
<svg class="b" style="left:684px;top:1092px" width="17" height="16" viewBox="0 0 17 16"><path d="M1 1 L6 6 M6 1 L1 6" stroke="#a03020" stroke-width="1.8"/><path d="M6 7 H15 L11.5 11 V15 H9.5 V11 Z" fill="#333"/></svg>
<div class="sep" style="left:707px;top:1090px;height:20px"></div>
<div class="cb" style="left:714px;top:1090px;width:150px;height:20px;line-height:19px">Build + IntelliSense</div><div class="ds" style="left:854px;top:1099px"></div>
<div class="b" style="left:1087px;top:1090px;width:200px;height:20px;background:#fff"></div>
<b class="x" style="left:1092px;top:1092px;color:#717171">Search Error List</b>
<svg class="b" style="left:1260px;top:1093px" width="14" height="14" viewBox="0 0 14 14"><circle cx="8.5" cy="5" r="3.5" fill="none" stroke="#424242" stroke-width="1.5"/><path d="M6 8 L2.5 13" stroke="#424242" stroke-width="2"/></svg>
<div class="ds" style="left:1277px;top:1099px"></div>
<!-- bottom tabs -->
<div class="tab" style="left:202px;width:85px">Find Results 1</div>
<div class="tab" style="left:288px;width:96px">Diagnostic Tools</div>
<div class="tab" style="left:385px;width:121px">Code Metrics Results</div>
<div class="tab" style="left:507px;width:120px">Web Publish Activity</div>
<div class="tab" style="left:628px;width:115px">Command Window</div>
<div class="tab" style="left:744px;width:126px">Data Tools Operations</div>
<div class="tab" style="left:871px;width:150px">Package Manager Console</div>
<div class="tab" style="left:1022px;width:100px">Mapping Details</div>
<div class="tab" style="left:1121px;width:57px;background:#fff;color:#1e1e1e">Error List</div>
<div class="tab" style="left:1179px;width:48px">Output</div>

<!-- ===== Solution Explorer ===== -->
<div class="title" style="left:1294px;top:85px;width:299px"></div>
<b class="x w" style="left:1299px;top:89px;letter-spacing:-.15px">Solution Explorer</b>
<div class="ds" style="left:1545px;top:95px;border-top-color:#fff"></div>
<svg class="b" style="left:1560px;top:90px" width="10" height="12"><use href="#pin"/></svg>
<svg class="b" style="left:1577px;top:91px" width="10" height="10"><use href="#x"/></svg>
<div class="tb" style="left:1295px;top:107px;width:284px;height:28px;background:#ccd5e8"></div>
<div class="tb" style="left:1579px;top:107px;width:14px;height:28px;background:#d6dbe9"></div>
<svg class="b" style="left:1301px;top:113px;color:#b4b9c4" width="16" height="16"><use href="#circ"/></svg>
<svg class="b" style="left:1324px;top:113px;color:#b4b9c4" width="16" height="16"><use href="#circ" transform="matrix(-1 0 0 1 16 0)"/></svg>
<svg class="b" style="left:1346px;top:113px" width="16" height="16" viewBox="0 0 16 16"><path d="M8 1 L15 8 H13 V15 H3 V8 H1 Z" fill="#fff" stroke="#333"/><path d="M6.5 15 V10 H9.5 V15" fill="none" stroke="#333"/></svg>
<svg class="b" style="left:1369px;top:113px" width="16" height="16" viewBox="0 0 16 16"><path d="M1 5 H11 V15 H1 Z" fill="#fff" stroke="#333"/><path d="M6 1 H9 L10 3 H15 V9 H6 Z" fill="#dcb67a"/></svg><div class="ds" style="left:1391px;top:120px"></div>
<div class="sep" style="left:1404px;top:110px;height:21px"></div>
<svg class="b" style="left:1413px;top:113px" width="16" height="16" viewBox="0 0 16 16"><circle cx="9" cy="10" r="5" fill="#fff" stroke="#333"/><path d="M9 7 V10 H12 M2 1 H6 M4 1 V5" fill="none" stroke="#333"/></svg><div class="ds" style="left:1434px;top:120px"></div>
<svg class="b" style="left:1446px;top:113px" width="16" height="16" viewBox="0 0 16 16"><path d="M14 5 H4 M7 1.5 L3 5 L7 8.5" fill="none" stroke="#333" stroke-width="2"/><path d="M2 11 H12 M9 7.5 L13 11 L9 14.5" fill="none" stroke="#333" stroke-width="2"/></svg>
<svg class="b" style="left:1468px;top:113px" width="16" height="16"><use href="#rf"/></svg>
<svg class="b" style="left:1490px;top:113px" width="16" height="16" viewBox="0 0 16 16"><path d="M5 1.5 H14 V10 H11 M2 5 H11 V14 H2 Z" fill="#fff" stroke="#333"/></svg>
<div class="b" style="left:1509px;top:109px;width:22px;height:24px;background:#fff;border:1px solid #234;box-sizing:border-box"></div>
<svg class="b" style="left:1512px;top:113px" width="16" height="16" viewBox="0 0 16 16"><path d="M2 1 H10 M2 1 V13 M5 4 H14 V15 H5 Z M7 7 H12 M7 10 H12" fill="none" stroke="#333"/></svg>
<div class="sep" style="left:1535px;top:110px;height:21px"></div>
<svg class="b" style="left:1542px;top:112px" width="16" height="18" viewBox="0 0 16 18"><path d="M15 1 C11 0 8 3 9 6 L1 14 L3.5 17 L11 9 C14 9.5 16 7 15.5 3 L13 5.5 L10.5 3.5 Z" fill="#333"/></svg>
<div class="x" style="left:1585px;top:106px;color:#444;font-size:10px">››</div>
<div class="b" style="left:1295px;top:135px;width:298px;height:21px;background:#fff"></div>
<b class="x" style="left:1300px;top:138px;color:#717171">Search Solution Explorer (Ctrl+;)</b>
<svg class="b" style="left:1564px;top:138px" width="14" height="14" viewBox="0 0 14 14"><circle cx="8.5" cy="5" r="3.5" fill="none" stroke="#424242" stroke-width="1.5"/><path d="M6 8 L2.5 13" stroke="#424242" stroke-width="2"/></svg>
<div class="ds" style="left:1583px;top:145px"></div>
<div class="b" style="left:1295px;top:158px;width:298px;height:916px;background:#fff"></div>
<div class="tree" style="left:1295px;top:161px;width:281px;height:899px;--ax:10px;--ix:30px;--tx:51px;--in:18px">
<div class="r"><svg class="ar"><use href="#ra"/></svg><svg class="ic"><use href="#refs"/></svg><span class="t">References</span></div>
<div class="r"><svg class="ar"><use href="#da"/></svg><svg class="ic"><use href="#fop"/></svg><span class="t">App_Code</span></div>
<div class="r L1"><svg class="st"><use href="#ck"/></svg><span class="vb">VB</span><span class="t">Extensions.vb</span></div>
<div class="r L1"><svg class="ar"><use href="#ra"/></svg><svg class="st"><use href="#ck"/></svg><span class="vb">VB</span><span class="t">Mgtl.vb</span></div>
<div class="r L1"><svg class="ar"><use href="#ra"/></svg><svg class="st"><use href="#ck"/></svg><span class="vb">VB</span><span class="t">MgtlDbContext.vb</span></div>
<div class="r"><svg class="ar"><use href="#ra"/></svg><svg class="ic"><use href="#fo"/></svg><span class="t">App_Data</span></div>
<div class="r"><svg class="ar"><use href="#ra"/></svg><svg class="ic"><use href="#fo"/></svg><span class="t">App_Start</span></div>
<div class="r"><svg class="ar"><use href="#ra"/></svg><svg class="ic"><use href="#dots"/></svg><span class="t">bin</span></div>
<div class="r"><svg class="ar"><use href="#ra"/></svg><svg class="ic"><use href="#fo"/></svg><span class="t">Content</span></div>
<div class="r"><svg class="ar"><use href="#da"/></svg><svg class="ic"><use href="#fop"/></svg><span class="t">Controllers</span></div>
<div class="r L1"><svg class="ar"><use href="#ra"/></svg><svg class="st"><use href="#lk"/></svg><span class="vb">VB</span><span class="t">AccountController.vb</span></div>
<div class="r L1"><svg class="ar"><use href="#ra"/></svg><svg class="st"><use href="#ck"/></svg><span class="vb">VB</span><span class="t">CabController.vb</span></div>
<div class="r L1"><svg class="ar"><use href="#ra"/></svg><svg class="st"><use href="#pl"/></svg><span class="vb">VB</span><span class="t">CabControllerLoader.vb</span></div>
<div class="r L1"><svg class="ar"><use href="#ra"/></svg><svg class="st"><use href="#lk"/></svg><span class="vb">VB</span><span class="t">HomeController.vb</span></div>
<div class="r L1"><svg class="ar"><use href="#ra"/></svg><svg class="st"><use href="#lk"/></svg><span class="vb">VB</span><span class="t">ManageController.vb</span></div>
<div class="r"><svg class="ar"><use href="#ra"/></svg><svg class="ic"><use href="#fo"/></svg><span class="t">fonts</span></div>
<div class="r"><svg class="ar"><use href="#ra"/></svg><svg class="ic"><use href="#fo"/></svg><span class="t">Images</span></div>
<div class="r"><svg class="ar"><use href="#ra"/></svg><svg class="ic"><use href="#fo"/></svg><span class="t">Migrations</span></div>
<div class="r"><svg class="ar"><use href="#ra"/></svg><svg class="ic"><use href="#fo"/></svg><span class="t">Models</span></div>
<div class="r"><svg class="ar"><use href="#ra"/></svg><svg class="ic"><use href="#dots"/></svg><span class="t">obj</span></div>
<div class="r"><svg class="ar"><use href="#ra"/></svg><svg class="ic"><use href="#fo"/></svg><span class="t">Scripts</span></div>
<div class="r"><svg class="ar"><use href="#ra"/></svg><svg class="ic"><use href="#fo"/></svg><span class="t">Tmp</span></div>
<div class="r"><svg class="ar"><use href="#da"/></svg><svg class="ic"><use href="#fop"/></svg><span class="t">Views</span></div>
<div class="r L1"><svg class="ar"><use href="#da"/></svg><svg class="ic"><use href="#fop"/></svg><span class="t">Account</span></div>
<div class="r L2"><svg class="st"><use href="#lk"/></svg><span class="fi">[@]</span><span class="t">_ExternalLoginsListPartial.vbhtml</span></div>
<div class="r L2"><svg class="st"><use href="#lk"/></svg><span class="fi">[@]</span><span class="t">ConfirmEmail.vbhtml</span></div>
<div class="r L2"><svg class="st"><use href="#lk"/></svg><span class="fi">[@]</span><span class="t">ExternalLoginConfirmation.vbhtml</span></div>
<div class="r L2"><svg class="st"><use href="#lk"/></svg><span class="fi">[@]</span><span class="t">ExternalLoginFailure.vbhtml</span></div>
<div class="r L2"><svg class="st"><use href="#lk"/></svg><span class="fi">[@]</span><span class="t">ForgotPassword.vbhtml</span></div>
<div class="r L2"><svg class="st"><use href="#lk"/></svg><span class="fi">[@]</span><span class="t">ForgotPasswordConfirmation.vbhtml</span></div>
<div class="r L2"><svg class="st"><use href="#lk"/></svg><span class="fi">[@]</span><span class="t">Login.vbhtml</span></div>
<div class="r L2"><svg class="st"><use href="#lk"/></svg><span class="fi">[@]</span><span class="t">Register.vbhtml</span></div>
<div class="r L2"><svg class="st"><use href="#lk"/></svg><span class="fi">[@]</span><span class="t">ResetPassword.vbhtml</span></div>
<div class="r L2"><svg class="st"><use href="#lk"/></svg><span class="fi">[@]</span><span class="t">ResetPasswordConfirmation.vbhtml</span></div>
<div class="r L2"><svg class="st"><use href="#lk"/></svg><span class="fi">[@]</span><span class="t">SendCode.vbhtml</span></div>
<div class="r L2"><svg class="st"><use href="#lk"/></svg><span class="fi">[@]</span><span class="t">VerifyCode.vbhtml</span></div>
<div class="r L1"><svg class="ar"><use href="#da"/></svg><svg class="ic"><use href="#fop"/></svg><span class="t">Cab</span></div>
<div class="r L2"><svg class="st"><use href="#lk"/></svg><span class="fi">[@]</span><span class="t">AccountNumber.vbhtml</span></div>
<div class="r L2"><svg class="st"><use href="#lk"/></svg><span class="fi">[@]</span><span class="t">CompanyName.vbhtml</span></div>
<div class="r L2 sel"><svg class="st"><use href="#ck"/></svg><span class="fi">[@]</span><span class="t">Index.vbhtml</span></div>
<div class="r L2"><svg class="st"><use href="#lk"/></svg><span class="fi">[@]</span><span class="t">InvoiceFormular.vbhtml</span></div>
<div class="r L2"><svg class="st"><use href="#lk"/></svg><span class="fi">[@]</span><span class="t">ItemCode.vbhtml</span></div>
<div class="r L2"><svg class="st"><use href="#lk"/></svg><span class="fi">[@]</span><span class="t">LoadError.vbhtml</span></div>
<div class="r L2"><svg class="st"><use href="#ck"/></svg><span class="fi">[@]</span><span class="t">SelectSheetAndColumn.vbhtml</span></div>
<div class="r L2"><svg class="st"><use href="#lk"/></svg><span class="fi">[@]</span><span class="t">Success.vbhtml</span></div>
<div class="r L2"><svg class="st"><use href="#lk"/></svg><span class="fi">[@]</span><span class="t">Worktype.vbhtml</span></div>
<div class="r L2"><svg class="st"><use href="#lk"/></svg><span class="fi">[@]</span><span class="t">XeroAccountNumber.vbhtml</span></div>
<div class="r L1"><svg class="ar"><use href="#ra"/></svg><svg class="ic"><use href="#fo"/></svg><span class="t">Home</span></div>
<div class="r L1"><svg class="ar"><use href="#ra"/></svg><svg class="ic"><use href="#fo"/></svg><span class="t">Manage</span></div>
<div class="r L1"><svg class="ar"><use href="#ra"/></svg><svg class="ic"><use href="#fo"/></svg><span class="t">Shared</span></div>
</div>
<div class="sb" style="left:1576px;top:158px;width:17px;height:902px"></div>
<div class="th" style="left:1580px;top:220px;width:9px;height:823px"></div>
<svg class="b" style="left:1580px;top:166px" width="10" height="6"><path d="M0 6 L5 0 L10 6 Z" fill="#9a9aa0"/></svg>
<svg class="b" style="left:1580px;top:1045px" width="10" height="6"><path d="M0 0 L5 6 L10 0 Z" fill="#9a9aa0"/></svg>
<div class="sb" style="left:1295px;top:1060px;width:298px;height:14px"></div>
<div class="th" style="left:1312px;top:1061px;width:244px;height:9px"></div>
<svg class="b" style="left:1302px;top:1061px" width="6" height="9"><path d="M6 0 L0 4.5 L6 9 Z" fill="#c8c8cc"/></svg>
<svg class="b" style="left:1565px;top:1061px" width="6" height="9"><path d="M0 0 L6 4.5 L0 9 Z" fill="#777"/></svg>
<div class="b" style="left:1294px;top:1074px;width:255px;height:21px;background:#4d6082"></div>
<div class="b" style="left:1295px;top:1074px;width:100px;height:21px;background:#fff"></div>
<b class="x" style="left:1300px;top:1077px;letter-spacing:-.35px">Solution Explorer</b>
<b class="x w" style="left:1403px;top:1077px;letter-spacing:-.4px">Class View</b>
<b class="x w" style="left:1469px;top:1077px;letter-spacing:-.25px">Team Explorer</b>
<div class="title" style="left:1294px;top:1101px;width:299px"></div>
<b class="x w" style="left:1299px;top:1105px">Properties</b>
<div class="ds" style="left:1545px;top:1111px;border-top-color:#fff"></div>
<svg class="b" style="left:1560px;top:1106px" width="10" height="12"><use href="#pin"/></svg>
<svg class="b" style="left:1577px;top:1107px" width="10" height="10"><use href="#x"/></svg>
<div class="b" style="left:1295px;top:1123px;width:298px;height:8px;background:#fff"></div>
<b class="x" style="left:1296px;top:1060px;font-size:20px;line-height:26px;color:rgba(130,135,145,.55)">Activate Windows</b>
<b class="x" style="left:1296px;top:1086px;font-size:15px;line-height:20px;color:rgba(130,135,145,.6)">Go to Settings to activate Windows.</b>

<!-- ===== Status ===== -->
<div class="b" style="left:0;top:1137px;width:1600px;height:23px;background:#007acc"></div>
<svg class="b" style="left:4px;top:1142px" width="16" height="13" viewBox="0 0 16 13"><path d="M4 1 H15 L12.5 12 H1.5 Z" fill="none" stroke="#fff"/></svg>
<b class="x w" style="left:28px;top:1141px">Ready</b>
<b class="x w" style="left:840px;top:1141px">Ln 1</b><b class="x w" style="left:933px;top:1141px">Col 1</b><b class="x w" style="left:1024px;top:1141px">Ch 1</b><b class="x w" style="left:1161px;top:1141px">INS</b>
<svg class="b" style="left:1246px;top:1143px" width="10" height="12" viewBox="0 0 10 12"><path d="M5 0 L10 6 H6.5 V12 H3.5 V6 H0 Z" fill="#fff"/></svg>
<b class="x w" style="left:1266px;top:1141px">6</b>
<svg class="b" style="left:1296px;top:1142px" width="12" height="13" viewBox="0 0 12 13"><path d="M9 0 L12 2.5 L4 12 L0 13 L1 9 Z" fill="#fff"/></svg>
<b class="x w" style="left:1316px;top:1141px">17</b>
<svg class="b" style="left:1350px;top:1142px" width="14" height="14" viewBox="0 0 14 14"><path d="M7 0 L14 7 L7 14 L0 7 Z" fill="#fff"/><path d="M6 4 L8 6 V10" stroke="#007acc" fill="none"/></svg>
<b class="x w" style="left:1372px;top:1141px">AustraliaReportServer</b>
<svg class="b" style="left:1508px;top:1142px" width="14" height="14" viewBox="0 0 14 14"><path d="M3 3 L7 8 L11 3 M7 8 V13" fill="none" stroke="#fff" stroke-width="1.6"/><circle cx="3" cy="2.5" r="2" fill="#fff"/><circle cx="11" cy="2.5" r="2" fill="#fff"/></svg>
<b class="x w" style="left:1530px;top:1141px">master</b>
<div class="b" style="left:1572px;top:1147px;width:0;height:0;border-left:4px solid transparent;border-right:4px solid transparent;border-bottom:4px solid #fff"></div>
<div class="b" style="left:0;top:1160px;width:1600px;height:3px;background:#2e2c22"></div>
<div class="b" style="left:144px;top:1160px;width:44px;height:3px;background:#b5651d"></div>
<div class="b" style="left:684px;top:1160px;width:26px;height:3px;background:#555"></div>
<div class="b" style="left:775px;top:1160px;width:37px;height:3px;background:#4a7a3a"></div>
</body></html>
